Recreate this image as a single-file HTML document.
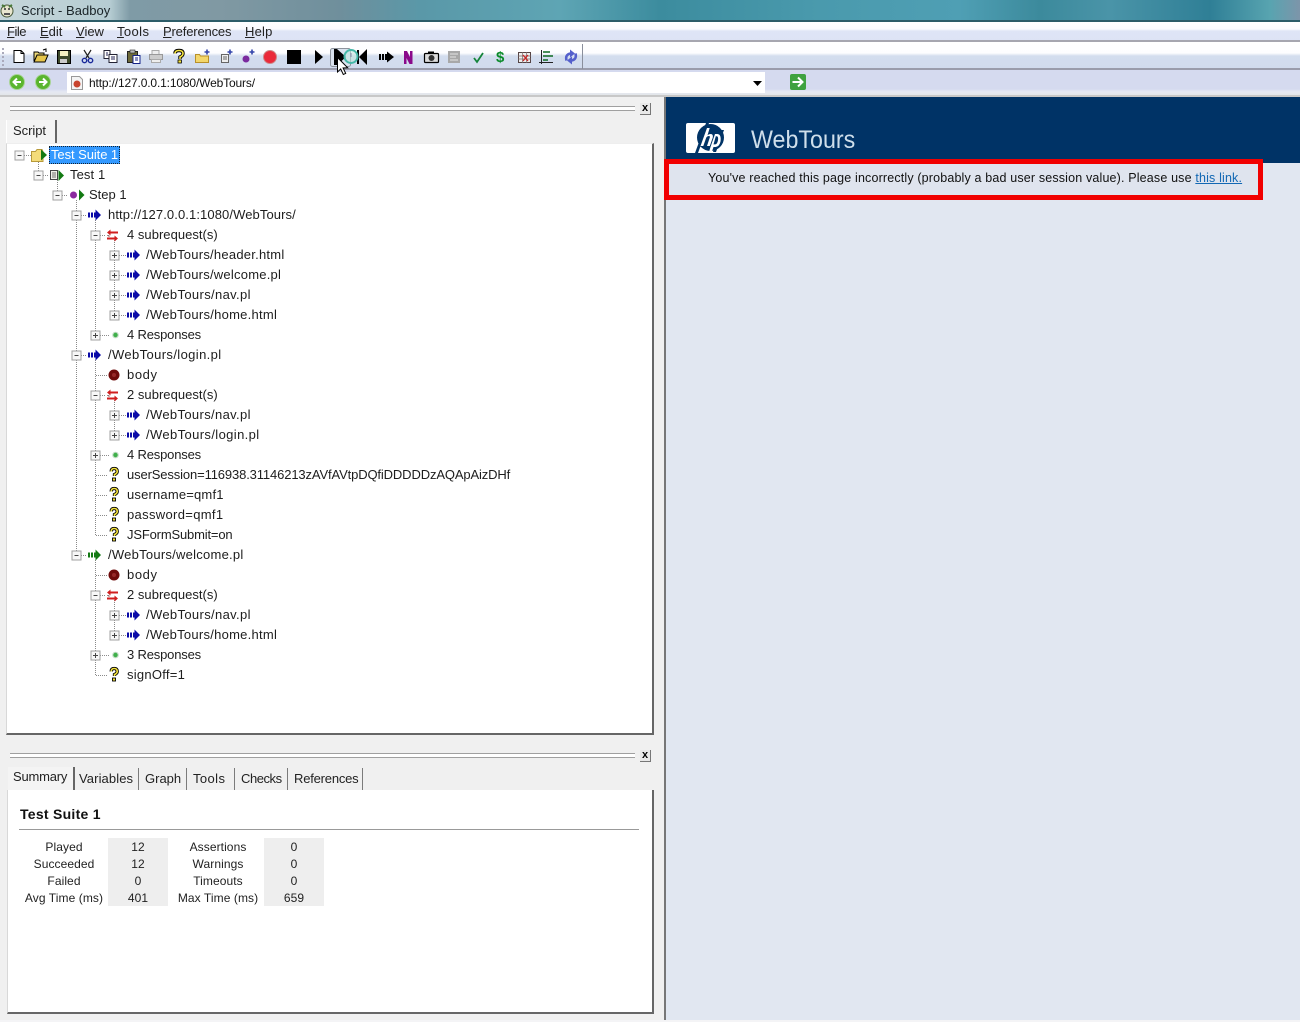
<!DOCTYPE html>
<html><head><meta charset="utf-8"><title>Script - Badboy</title>
<style>
html,body{margin:0;padding:0;width:1300px;height:1022px;overflow:hidden;background:#f0f0f0;font-family:"Liberation Sans",sans-serif;color:#222}
div,span,svg,a{position:absolute;display:block}
u{text-decoration:underline}
.t{font-size:13px;line-height:16px;white-space:nowrap;letter-spacing:.1px;color:#1d1d1d}
.m{font-size:13px;line-height:16px;top:24px;white-space:nowrap;color:#222;letter-spacing:.2px}
.tab{font-size:13px;line-height:16px;white-space:nowrap;top:771px;color:#222;letter-spacing:.2px}
.sep{background:#7b7b7b;top:768px;height:22px;width:1px}
.c{font-size:12px;line-height:17px;text-align:center;white-space:nowrap;color:#222;letter-spacing:.08px}
</style></head><body>

<!-- title bar -->
<div style="left:0;top:0;width:1300px;height:21px;background:linear-gradient(90deg,#c6d6da 0,#b5ccd2 110px,#7f9ba6 130px,#8099a3 220px,#6f8f9c 340px,#5a98a8 420px,#5ea5b4 560px,#3c8c9e 660px,#4a9aad 820px,#4f9fb4 960px,#3c8a9c 1040px,#4a94a8 1110px,#2f7f96 1210px,#58a4b0 1270px,#7d95aa 1300px)"></div>
<div style="left:0;top:20px;width:1300px;height:2px;background:#2c5c68"></div>
<svg style="left:0;top:2px" width="16" height="18" viewBox="0 0 16 18"><circle cx="7" cy="9" r="6" fill="#e9e6cf" stroke="#4a5a3a"/><circle cx="5" cy="7" r="1" fill="#333"/><circle cx="9" cy="7" r="1" fill="#333"/><path d="M4 11h6v2H4z" fill="#555"/><path d="M2 3l3 2M12 3L9 5" stroke="#4a7a3a" stroke-width="2"/></svg>
<div class="t" style="left:21px;top:3px;color:#1a2428;letter-spacing:.03px">Script - Badboy</div>

<!-- menu -->
<div style="left:0;top:22px;width:1300px;height:19px;background:linear-gradient(#fff 0,#fbfbfe 7px,#dfe5f6 9px,#dde3f5 19px)"></div>
<div style="left:0;top:40px;width:1300px;height:2px;background:#a6a6b0"></div>
<div style="left:0;top:42px;width:1300px;height:1px;background:#fff"></div>
<div class="m" style="left:7px;letter-spacing:-.5px"><u>F</u>ile</div>
<div class="m" style="left:40px;letter-spacing:0"><u>E</u>dit</div>
<div class="m" style="left:76px;letter-spacing:0"><u>V</u>iew</div>
<div class="m" style="left:117px;letter-spacing:.4px"><u>T</u>ools</div>
<div class="m" style="left:163px;letter-spacing:-.16px"><u>P</u>references</div>
<div class="m" style="left:245px"><u>H</u>elp</div>

<!-- toolbar -->
<div style="left:0;top:43px;width:1300px;height:25px;background:linear-gradient(#fff 0,#fdfdff 10px,#d3ddee 13px,#d1dbed 25px)"></div>
<div style="left:0;top:68px;width:1300px;height:2px;background:#9a9cab"></div>
<div style="left:582px;top:44px;width:1px;height:25px;background:#8a8f9c"></div>
<div style="left:2px;top:48px;width:2px;height:18px;background:repeating-linear-gradient(#aab 0 2px,transparent 2px 4px)"></div>

<!-- address -->
<div style="left:0;top:70px;width:1300px;height:25px;background:linear-gradient(#d5daef 0,#d5daef 19px,#e6e9f2 22px,#e2e5e8 25px)"></div>
<div style="left:0;top:95px;width:1300px;height:2px;background:#c8c8c8"></div>

<svg style="left:0;top:43px;z-index:2" width="600" height="35" viewBox="0 43 600 35">
 <!-- new -->
 <path d="M14 50.500h7l3 3v9H14z" fill="#fff" stroke="#000"/><path d="M21 50.500v3h3" fill="none" stroke="#000"/>
 <!-- open -->
 <path d="M34 61V52h4l1 1h5v2" fill="#eeda7a" stroke="#000"/><path d="M34 62l3-7h11l-3 7z" fill="#e6c64c" stroke="#000"/><path d="M43 50l3-1v3" fill="none" stroke="#000"/>
 <!-- save -->
 <rect x="57.500" y="50.500" width="13" height="13" fill="#3d4a2a" stroke="#000"/><rect x="60" y="51" width="8" height="5" fill="#f4f0c0"/><rect x="60" y="59" width="7" height="4" fill="#ccc"/>
 <!-- cut -->
 <path d="M84 50l5 8M91 50l-5 8" stroke="#222" stroke-width="1.200"/><circle cx="84.500" cy="60.500" r="2.200" fill="none" stroke="#1b2a9a" stroke-width="1.400"/><circle cx="90.500" cy="60.500" r="2.200" fill="none" stroke="#1b2a9a" stroke-width="1.400"/>
 <!-- copy -->
 <path d="M104 50.500h6v8h-6z" fill="#fff" stroke="#223"/><path d="M109 54.500h8v8h-8z" fill="#fff" stroke="#223"/><path d="M111 57h4M111 59h4" stroke="#225"/><path d="M106 53h2M106 55h2" stroke="#225"/>
 <!-- paste -->
 <rect x="127.500" y="51.500" width="10" height="11" fill="#6d6a3a" stroke="#222"/><rect x="130" y="50" width="5" height="3" fill="#bbb" stroke="#222" stroke-width=".6"/><path d="M133 55.500h7v8h-7z" fill="#fff" stroke="#16238a"/><path d="M135 58h3M135 60h3" stroke="#16238a"/>
 <!-- print -->
 <path d="M152 50.500h7v4h-7z" fill="#eee" stroke="#aaa"/><path d="M149.500 54.500h13v5h-13z" fill="#ccc" stroke="#999"/><path d="M151.500 59.500h9v3h-9z" fill="#eee" stroke="#aaa"/>
 <!-- ? -->
 <path d="M175 53.500q0-3 4-3t4 3q0 2-3 3.500v2" fill="none" stroke="#000" stroke-width="3.400"/><path d="M175 53.500q0-3 4-3t4 3q0 2-3 3.500v2" fill="none" stroke="#f4e23c" stroke-width="1.600"/><rect x="178" y="60" width="3.400" height="3" fill="#f4e23c" stroke="#000" stroke-width=".8"/>
 <!-- add folder -->
 <path d="M195.500 62.500v-8h4l1 1.500h8v6.500z" fill="#f3d66a" stroke="#b8902a"/><path d="M207 49.500v5M204.500 52h5" stroke="#3344aa" stroke-width="1.600"/>
 <!-- add test -->
 <path d="M221.500 54.500h7v8h-7z" fill="#eee" stroke="#666"/><path d="M223 57h4M223 59h4" stroke="#666"/><path d="M230 49.500v5M227.500 52h5" stroke="#3344aa" stroke-width="1.600"/>
 <!-- add step -->
 <circle cx="246" cy="59" r="3.500" fill="#7a2a9e"/><path d="M252 49.500v5M249.500 52h5" stroke="#3344aa" stroke-width="1.600"/>
 <!-- record -->
 <circle cx="270" cy="57" r="6.500" fill="#ea2a3a" stroke="#c88"/>
 <!-- stop -->
 <rect x="287" y="50" width="14" height="14" fill="#000"/>
 <!-- play -->
 <path d="M315 50l8 7-8 7z" fill="#000"/>
 <!-- hover box -->
 <rect x="330.500" y="48.500" width="20" height="18" rx="2" fill="#dbe3ef" stroke="#8d939c"/>
 <!-- next -->
 <path d="M334 49h3v16h-3zM337 49l9 8-9 8z" fill="#000"/>
 <!-- prev -->
 <path d="M359 57l8-8v16z" fill="#000"/><rect x="357" y="50" width="2" height="14" fill="#000"/>
 <circle cx="351" cy="56.500" r="6.500" fill="#bfe6dc" fill-opacity=".55" stroke="#46b8a8" stroke-width="2"/><path d="M351 53v4" stroke="#88a" stroke-width="1"/>
 <!-- cursor -->
 <path d="M337.500 57.500v14.500l3.200-3 2.600 5.500 2.400-1.100-2.600-5.400 4.600-.2z" fill="#fff" stroke="#000"/>
 <!-- run -->
 <path d="M379 54h2v6h-2zM382 54h2v6h-2zM385 54h2v6h-2zM387 51.500l7 5.500-7 5.500z" fill="#000"/>
 <!-- N -->
 <path d="M404 51h3l3 6v-6h2.500v13h-3l-3-6v6H404z" fill="#8a0a8a"/>
 <!-- camera -->
 <rect x="424.500" y="53.500" width="14" height="9" rx="1" fill="#ddd" stroke="#000" stroke-width="1.200"/><circle cx="431.500" cy="58" r="3" fill="#333"/><rect x="428" y="51.500" width="6" height="2" fill="#000"/>
 <!-- doc -->
 <rect x="448" y="51" width="12" height="12" fill="#a8a8a8"/><path d="M450 54h8M450 57h6M450 60h8" stroke="#e4e4e4"/>
 <!-- check -->
 <path d="M474 58l3 4 6-9" fill="none" stroke="#14843a" stroke-width="1.800"/>
 <!-- dollar -->
 <text x="496" y="62" font-family="Liberation Sans" font-weight="700" font-size="15" fill="#0a8a2a">$</text>
 <!-- table -->
 <rect x="518.500" y="52.500" width="12" height="10" fill="#eee" stroke="#544"/><path d="M518 56h13M518 59h13M522.500 52v11M526.500 52v11" stroke="#766" stroke-width=".7"/><path d="M523 55l5 6M528 55l-5 6" stroke="#c22" stroke-width="1.200"/>
 <!-- chart -->
 <path d="M541.500 50v14M539 62.500h14" stroke="#222" fill="none"/><path d="M543 52h7M543 56h10M543 60h5" stroke="#0d6a20" stroke-width="1.400"/>
 <!-- sync -->
 <path d="M566.500 60.500q-1.500-6 4-7" fill="none" stroke="#5560cc" stroke-width="2.600"/><path d="M570 49.500l5 4-5 4z" fill="#5560cc"/><path d="M575.500 53.500q1.500 6-4 7" fill="none" stroke="#5560cc" stroke-width="2.600"/><path d="M572 56.500l-5 4 5 4z" fill="#5560cc"/>
</svg>

<svg style="left:8px;top:73px" width="45" height="18" viewBox="0 0 45 18">
 <circle cx="9" cy="9" r="7.500" fill="#5ab52f" stroke="#a8d496"/><path d="M13 9H6M9 5.500L5.500 9 9 12.500" fill="none" stroke="#fff" stroke-width="2"/>
 <circle cx="35" cy="9" r="7.500" fill="#5ab52f" stroke="#a8d496"/><path d="M31 9h7M35 5.500L38.500 9 35 12.500" fill="none" stroke="#fff" stroke-width="2"/>
</svg>
<div style="left:67px;top:72px;width:698px;height:21px;background:#fff"></div>
<svg style="left:71px;top:76px" width="12" height="14" viewBox="0 0 12 14"><path d="M.5.5h8l3 3v10H.5z" fill="#f4f4f4" stroke="#999"/><circle cx="6" cy="8" r="3.500" fill="#c8442e"/></svg>
<div style="left:89px;top:75px;font-size:12px;line-height:16px;white-space:nowrap;color:#111;letter-spacing:-.15px">http://127.0.0.1:1080/WebTours/</div>
<svg style="left:753px;top:81px" width="10" height="5"><path d="M0 0h9L4.500 5z" fill="#000"/></svg>
<svg style="left:789px;top:73px" width="18" height="18" viewBox="0 0 18 18"><rect x="1" y="1" width="16" height="16" rx="2" fill="#3fa23f"/><path d="M3.500 9h9M9 4.500L13.500 9 9 13.500" fill="none" stroke="#fff" stroke-width="2"/></svg>

<!-- left panel -->
<div style="left:0;top:97px;width:664px;height:925px;background:#f0f0f0"></div>
<div style="left:10px;top:106px;width:625px;height:5px;border-top:1px solid #a0a0a0;border-bottom:1px solid #a0a0a0;background:#fff;box-sizing:border-box"></div>
<div style="left:640px;top:103px;width:10px;height:11px;background:#e8e8e8;font:700 11px/10px 'Liberation Sans',sans-serif;text-align:center;color:#000;border-right:1px solid #777;border-bottom:1px solid #777">x</div>

<div style="left:6px;top:120px;width:51px;height:24px;background:#f4f4f4;border-right:2px solid #666;border-left:1px solid #fff;box-sizing:border-box"></div>
<div class="tab" style="left:13px;top:123px;letter-spacing:-.05px">Script</div>

<!-- tree box -->
<div style="left:6px;top:143px;width:648px;height:592px;background:#fff;box-sizing:border-box;border-left:1px solid #d8d8d8;border-right:2px solid #666;border-bottom:2px solid #666;border-top:1px solid #eee"></div>

<svg style="left:0;top:140px" width="300" height="550" viewBox="0 140 300 550">
 <defs>
  <g id="minus"><rect x="-4.500" y="-4.500" width="9" height="9" fill="#f7f7f7" stroke="#a0a0a0"/><path d="M-2 0h4" stroke="#444"/></g>
  <g id="plus"><rect x="-4.500" y="-4.500" width="9" height="9" fill="#f7f7f7" stroke="#a0a0a0"/><path d="M-2.500 0h5M0-2.500v5" stroke="#444"/></g>
  <g id="arr"><path d="M0-2.500h2v5H0zM3-2.500h2v5H3zM6-2.500h1.500V-5.500L13 0 7.500 5.500V2.500H6z" fill="#0a0aa8"/></g>
  <g id="garr"><path d="M0-2.500h2v5H0zM3-2.500h2v5H3zM6-2.500h1.500V-5.500L13 0 7.500 5.500V2.500H6z" fill="#147a14"/></g>
  <g id="sub"><path d="M3.500-5.500v2H11v2H3.500v2L0-2.500z" fill="#d01f1f"/><path d="M7.500 0.500v2H0v2h7.500v2L11 3.500z" fill="#d01f1f"/><path d="M0 0.500h2v1.500" stroke="#411" stroke-width=".6" fill="none"/></g>
  <g id="body"><circle r="5.500" fill="#6e0a0a"/><circle r="2" fill="#962828"/></g>
  <g id="q"><path d="M-2.800-3.500q0-3 3-3t3 3q0 2-2.700 3v1.500" fill="none" stroke="#000" stroke-width="3.300"/><path d="M-2.800-3.500q0-3 3-3t3 3q0 2-2.700 3v1.500" fill="none" stroke="#f2e03a" stroke-width="1.600"/><rect x="-1.500" y="3" width="3" height="3" fill="#f2e03a" stroke="#000" stroke-width=".9"/></g>
  <g id="dot"><circle r="3.300" fill="#c4dcc6"/><circle r="2.200" fill="#3fb04a"/></g>
 </defs>
 <g stroke="#8a8a8a" stroke-dasharray="1 1" fill="none">
  <path d="M38.500 160v15M57.500 180v15M76.500 200v355M95.500 220v115M95.500 360v175M95.500 560v115M114.500 240v75M114.500 400v35M114.500 600v35"/>
  <path d="M24 155.500h7M43 175.500h6M62 195.500h6M81 215.500h6M100 235.500h6M119 255.500h7M119 275.500h7M119 295.500h7M119 315.500h7M100 335.500h9M81 355.500h6M96 375.500h12M100 395.500h6M119 415.500h7M119 435.500h7M100 455.500h9M96 475.500h12M96 495.500h12M96 515.500h12M96 535.500h12M81 555.500h6M96 575.500h12M100 595.500h6M119 615.500h7M119 635.500h7M100 655.500h9M96 675.500h12"/>
 </g>
 <use href="#minus" x="19.500" y="155.500"/><use href="#minus" x="38.500" y="175.500"/><use href="#minus" x="57.500" y="195.500"/><use href="#minus" x="76.500" y="215.500"/><use href="#minus" x="95.500" y="235.500"/>
 <use href="#plus" x="114.500" y="255.500"/><use href="#plus" x="114.500" y="275.500"/><use href="#plus" x="114.500" y="295.500"/><use href="#plus" x="114.500" y="315.500"/><use href="#plus" x="95.500" y="335.500"/>
 <use href="#minus" x="76.500" y="355.500"/><use href="#minus" x="95.500" y="395.500"/><use href="#plus" x="114.500" y="415.500"/><use href="#plus" x="114.500" y="435.500"/><use href="#plus" x="95.500" y="455.500"/>
 <use href="#minus" x="76.500" y="555.500"/><use href="#minus" x="95.500" y="595.500"/><use href="#plus" x="114.500" y="615.500"/><use href="#plus" x="114.500" y="635.500"/><use href="#plus" x="95.500" y="655.500"/>
 <!-- suite -->
 <path d="M31.500 161.500v-10h4l1.500-2h5l1 2v10z" fill="#f4dc7a" stroke="#b89a3a"/><path d="M41 149.500l6 5.500-6 5.500z" fill="#127a12"/>
 <!-- test -->
 <rect x="50.500" y="170.500" width="7" height="9" fill="#f0f0e8" stroke="#444"/><path d="M52 173h4M52 175h4M52 177h4" stroke="#444" stroke-width=".8"/><path d="M58.500 170l5.500 5.500-5.500 5.500z" fill="#127a12"/>
 <!-- step -->
 <circle cx="73.500" cy="195" r="3.500" fill="#8a2a9e"/><path d="M79 189.500l5.500 5.500-5.500 5.500z" fill="#127a12"/>
 <use href="#arr" x="88" y="215"/><use href="#sub" x="107" y="235"/>
 <use href="#arr" x="127" y="255"/><use href="#arr" x="127" y="275"/><use href="#arr" x="127" y="295"/><use href="#arr" x="127" y="315"/>
 <use href="#dot" x="115.500" y="335"/>
 <use href="#arr" x="88" y="355"/><use href="#body" x="114" y="375"/><use href="#sub" x="107" y="395"/>
 <use href="#arr" x="127" y="415"/><use href="#arr" x="127" y="435"/><use href="#dot" x="115.500" y="455"/>
 <use href="#q" x="114" y="475"/><use href="#q" x="114" y="495"/><use href="#q" x="114" y="515"/><use href="#q" x="114" y="535"/>
 <use href="#garr" x="88" y="555"/><use href="#body" x="114" y="575"/><use href="#sub" x="107" y="595"/>
 <use href="#arr" x="127" y="615"/><use href="#arr" x="127" y="635"/><use href="#dot" x="115.500" y="655"/><use href="#q" x="114" y="675"/>
</svg>

<div style="left:49px;top:146px;width:71px;height:18px;background:#3399ff;border:1px dotted #123;box-sizing:border-box"></div>
<div class="t" style="left:51px;top:147px;color:#fff;letter-spacing:-.07px">Test Suite 1</div>
<div class="t" style="left:70px;top:167px">Test 1</div>
<div class="t" style="left:89px;top:187px;letter-spacing:0">Step 1</div>
<div class="t" style="left:108px;top:207px">http://127.0.0.1:1080/WebTours/</div>
<div class="t" style="left:127px;top:227px;letter-spacing:.03px">4 subrequest(s)</div>
<div class="t" style="left:146px;top:247px;letter-spacing:.24px">/WebTours/header.html</div>
<div class="t" style="left:146px;top:267px;letter-spacing:.23px">/WebTours/welcome.pl</div>
<div class="t" style="left:146px;top:287px;letter-spacing:.35px">/WebTours/nav.pl</div>
<div class="t" style="left:146px;top:307px;letter-spacing:.26px">/WebTours/home.html</div>
<div class="t" style="left:127px;top:327px;letter-spacing:-.17px">4 Responses</div>
<div class="t" style="left:108px;top:347px;letter-spacing:.38px">/WebTours/login.pl</div>
<div class="t" style="left:127px;top:367px;letter-spacing:.6px">body</div>
<div class="t" style="left:127px;top:387px;letter-spacing:.03px">2 subrequest(s)</div>
<div class="t" style="left:146px;top:407px;letter-spacing:.35px">/WebTours/nav.pl</div>
<div class="t" style="left:146px;top:427px;letter-spacing:.38px">/WebTours/login.pl</div>
<div class="t" style="left:127px;top:447px;letter-spacing:-.17px">4 Responses</div>
<div class="t" style="left:127px;top:467px;letter-spacing:-.13px">userSession=116938.31146213zAVfAVtpDQfiDDDDDzAQApAizDHf</div>
<div class="t" style="left:127px;top:487px;letter-spacing:.18px">username=qmf1</div>
<div class="t" style="left:127px;top:507px;letter-spacing:.33px">password=qmf1</div>
<div class="t" style="left:127px;top:527px;letter-spacing:-.17px">JSFormSubmit=on</div>
<div class="t" style="left:108px;top:547px;letter-spacing:.25px">/WebTours/welcome.pl</div>
<div class="t" style="left:127px;top:567px;letter-spacing:.6px">body</div>
<div class="t" style="left:127px;top:587px;letter-spacing:.03px">2 subrequest(s)</div>
<div class="t" style="left:146px;top:607px;letter-spacing:.35px">/WebTours/nav.pl</div>
<div class="t" style="left:146px;top:627px;letter-spacing:.26px">/WebTours/home.html</div>
<div class="t" style="left:127px;top:647px;letter-spacing:-.17px">3 Responses</div>
<div class="t" style="left:127px;top:667px;letter-spacing:.26px">signOff=1</div>

<!-- bottom panel -->
<div style="left:10px;top:753px;width:625px;height:5px;border-top:1px solid #a0a0a0;border-bottom:1px solid #a0a0a0;background:#fff;box-sizing:border-box"></div>
<div style="left:640px;top:750px;width:10px;height:11px;background:#e8e8e8;font:700 11px/10px 'Liberation Sans',sans-serif;text-align:center;color:#000;border-right:1px solid #777;border-bottom:1px solid #777">x</div>

<div style="left:8px;top:767px;width:67px;height:24px;background:#f4f4f4;border-right:2px solid #666;box-sizing:border-box"></div>
<div class="tab" style="left:13px;top:769px;letter-spacing:-.2px">Summary</div>
<div class="tab" style="left:79px;letter-spacing:.1px">Variables</div>
<div class="tab" style="left:145px;letter-spacing:0">Graph</div>
<div class="tab" style="left:193px;letter-spacing:.4px">Tools</div>
<div class="tab" style="left:241px;letter-spacing:-.45px">Checks</div>
<div class="tab" style="left:294px;letter-spacing:-.2px">References</div>
<div class="sep" style="left:138px"></div><div class="sep" style="left:186px"></div><div class="sep" style="left:234px"></div><div class="sep" style="left:287px"></div><div class="sep" style="left:362px"></div>

<div style="left:7px;top:790px;width:647px;height:224px;background:#fff;box-sizing:border-box;border-left:1px solid #d8d8d8;border-right:2px solid #666;border-bottom:2px solid #666"></div>
<div style="left:20px;top:806px;font:700 14px/16px 'Liberation Sans',sans-serif;color:#111;white-space:nowrap;letter-spacing:.27px">Test Suite 1</div>
<div style="left:19px;top:829px;width:620px;height:1px;background:#999"></div>
<div style="left:108px;top:838px;width:60px;height:68px;background:#eeeeee"></div>
<div style="left:264px;top:838px;width:60px;height:68px;background:#eeeeee"></div>
<div class="c" style="left:14px;top:839px;width:100px">Played<br>Succeeded<br>Failed<br>Avg Time (ms)</div>
<div class="c" style="left:108px;top:839px;width:60px">12<br>12<br>0<br>401</div>
<div class="c" style="left:168px;top:839px;width:100px">Assertions<br>Warnings<br>Timeouts<br>Max Time (ms)</div>
<div class="c" style="left:264px;top:839px;width:60px">0<br>0<br>0<br>659</div>

<!-- right panel -->
<div style="left:664px;top:97px;width:2px;height:923px;background:#777"></div>
<div style="left:666px;top:97px;width:634px;height:923px;background:#e1e7f1"></div>
<div style="left:666px;top:97px;width:634px;height:66px;background:#003366"></div>
<div style="left:686px;top:123px;width:49px;height:30px;background:#fff;border-radius:2px"></div>
<svg style="left:686px;top:121px" width="49" height="34" viewBox="0 0 49 34">
 <circle cx="24.500" cy="16.500" r="13.500" fill="#003366"/>
 <path d="M20 2L9 32h3L23 2zM30 31l8-22h-3l-8 22z" fill="#003366"/>
 <path d="M21 7l-6.500 18h2.800l3-8.500q1-1.500 2.500-1.500 1.500 0 1 1.500L21 25h2.800l3-8.500q.5-3.500-2-3.500-1.800 0-3.300 1.200L23.700 7zM29 13l-4.500 13-1.500 5h2.800l1.700-5h2q4-.5 5-5.500 1-7-3-7.500zm1.600 2.200q2 0 1.400 4-.7 4-3 4.200h-1.500l2.300-8.200z" fill="#fff"/>
</svg>
<div style="left:751px;top:124px;font-size:25px;line-height:32px;color:#cfdfeb;white-space:nowrap;transform:scaleX(.93);transform-origin:left center">WebTours</div>
<div style="left:664px;top:159px;width:599px;height:41px;box-sizing:border-box;border:5px solid #f10000;background:#dfe4ee"></div>
<div style="left:708px;top:170px;font-size:12.500px;line-height:16px;white-space:nowrap;color:#111;letter-spacing:.16px">You've reached this page incorrectly (probably a bad user session value). Please use <u style="color:#1268b4">this link.</u></div>
<div style="left:0;top:1020px;width:1300px;height:2px;background:#f4f4f6"></div>
</body></html>
